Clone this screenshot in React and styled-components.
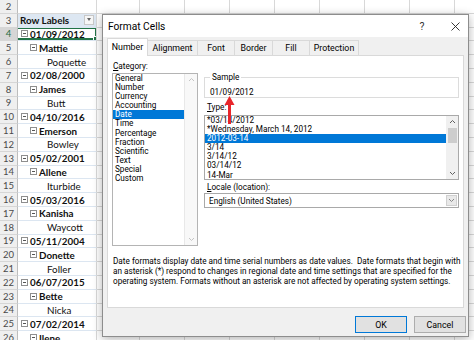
import React from 'react';
import styled, { createGlobalStyle } from 'styled-components';

const GlobalStyle = createGlobalStyle`
  html, body { margin: 0; padding: 0; background: #fff; }
  body { width: 474px; height: 340px; overflow: hidden; }
`;

const Page = styled.div`
  position: relative;
  width: 474px;
  height: 340px;
  overflow: hidden;
  font-family: Lato, 'Liberation Sans', sans-serif;
`;

/* ---------- spreadsheet ---------- */

const Sheet = styled.div`
  display: grid;
  grid-template-columns: 18px 79px 43px repeat(8, 45px);
  grid-auto-rows: 13.8px;
`;

const RowNum = styled.div`
  box-sizing: border-box;
  background: ${p => (p.$active ? '#d6d6d6' : '#efefef')};
  color: ${p => (p.$active ? '#1d6b3f' : '#4a4a4a')};
  border-right: 1px solid #bdbdbd;
  border-bottom: 1px solid #d6d6d6;
  font-size: 9.5px;
  display: flex;
  align-items: center;
  justify-content: center;
`;

const Cell = styled.div`
  box-sizing: border-box;
  border-right: 1px solid #d8d8d8;
  border-bottom: 1px solid #d8d8d8;
  background: #fff;
`;

const PivotCell = styled.div`
  position: relative;
  box-sizing: border-box;
  border-right: 1px solid #d8d8d8;
  border-bottom: 1px solid ${p => (p.$kind === 'blank' ? '#d8d8d8' : '#dce6f1')};
  background: ${p => (p.$kind === 'header' ? '#dde7f2' : '#fff')};
  display: flex;
  align-items: center;
  font-size: 9.8px;
  color: #111;
  font-weight: ${p => (p.$kind === 'last' ? 400 : 700)};
  padding-left: ${p =>
    ({ header: 2, date: 3, name: 12, last: 29, blank: 0 }[p.$kind])}px;
  gap: 2px;
  white-space: nowrap;
  overflow: hidden;
`;

const Selection = styled.div`
  position: absolute;
  inset: -1px -1px 0 -2px;
  border: 2px solid #217346;
  pointer-events: none;
  &::after {
    content: '';
    position: absolute;
    right: -4px;
    bottom: -4px;
    width: 4px;
    height: 4px;
    background: #217346;
    border: 1px solid #fff;
  }
`;

const Collapse = styled.span`
  position: relative;
  width: 5px;
  height: 5px;
  border: 1px solid #8e8e8e;
  flex: none;
  &::after {
    content: '';
    position: absolute;
    left: 1px;
    right: 1px;
    top: 2px;
    height: 1px;
    background: #555;
  }
`;

const FilterButton = styled.span`
  position: absolute;
  right: 2px;
  top: 1px;
  width: 10px;
  height: 10px;
  box-sizing: border-box;
  border: 1px solid #c8c8c8;
  background: #f6f6f6;
  display: flex;
  align-items: center;
  justify-content: center;
  &::after {
    content: '';
    border-left: 2.5px solid transparent;
    border-right: 2.5px solid transparent;
    border-top: 3px solid #666;
  }
`;

const pivot = [
  ['blank', ''],
  ['header', 'Row Labels'],
  ['date', '01/09/2012'],
  ['name', 'Mattie'],
  ['last', 'Poquette'],
  ['date', '02/08/2000'],
  ['name', 'James'],
  ['last', 'Butt'],
  ['date', '04/10/2016'],
  ['name', 'Emerson'],
  ['last', 'Bowley'],
  ['date', '05/02/2001'],
  ['name', 'Allene'],
  ['last', 'Iturbide'],
  ['date', '05/03/2016'],
  ['name', 'Kanisha'],
  ['last', 'Waycott'],
  ['date', '05/11/2004'],
  ['name', 'Donette'],
  ['last', 'Foller'],
  ['date', '06/07/2015'],
  ['name', 'Bette'],
  ['last', 'Nicka'],
  ['date', '07/02/2014'],
  ['name', 'Ilene'],
];

/* ---------- dialog ---------- */

const Dialog = styled.div`
  position: absolute;
  left: 102px;
  top: 14px;
  width: 367px;
  height: 323px;
  box-sizing: border-box;
  border: 1px solid #8d8d8d;
  background: #f0f0f0;
  box-shadow: 0 2px 9px rgba(0, 0, 0, 0.3);
  display: flex;
  flex-direction: column;
  font-family: Roboto, 'Noto Sans', sans-serif;
  font-size: 8.2px;
  color: #000;
`;

const TitleBar = styled.div`
  height: 22px;
  flex: none;
  background: #fff;
  display: flex;
  align-items: center;
  padding: 0 0 0 5px;
  font-size: 10.2px;
`;

const Title = styled.span`
  flex: 1;
`;

const TitleIcon = styled.span`
  width: ${p => p.$w}px;
  display: flex;
  justify-content: center;
  align-items: center;
  color: #333;
  font-size: 10.5px;
`;

const Body = styled.div`
  flex: 1;
  display: flex;
  flex-direction: column;
  padding: 2px 0 0 4px;
`;

const Tabs = styled.div`
  display: flex;
  height: 17px;
  align-items: flex-end;
  position: relative;
  z-index: 1;
  margin-bottom: -1px;
  font-size: 8.8px;
`;

const Tab = styled.div`
  box-sizing: border-box;
  width: ${p => p.$w}px;
  height: ${p => (p.$active ? 18 : 16)}px;
  background: ${p => (p.$active ? '#fff' : '#f0f0f0')};
  border: 1px solid #d9d9d9;
  border-bottom: ${p => (p.$active ? 'none' : '1px solid #d9d9d9')};
  margin-left: ${p => (p.$first ? 0 : -1)}px;
  display: flex;
  align-items: center;
  justify-content: center;
  padding-bottom: ${p => (p.$active ? 1 : 0)}px;
`;

const Panel = styled.div`
  position: relative;
  box-sizing: border-box;
  width: 357px;
  height: 253px;
  background: #fff;
  border: 1px solid #d9d9d9;
  padding: 5px 0 0 4px;
`;

const Columns = styled.div`
  display: grid;
  grid-template-columns: 86px 255px;
  column-gap: 6px;
`;

const Column = styled.div`
  display: flex;
  flex-direction: column;
  padding-top: ${p => p.$pt || 0}px;
`;

const Label = styled.div`
  line-height: 10px;
  height: 10px;
  margin-top: ${p => p.$mt || 0}px;
  margin-bottom: ${p => p.$mb || 0}px;
  padding-left: ${p => p.$pl || 0}px;
  u { text-decoration-thickness: 1px; text-underline-offset: 1px; }
`;

const ListBox = styled.div`
  box-sizing: border-box;
  height: ${p => p.$h}px;
  border: 1px solid ${p => p.$border || '#a9a9a9'};
  background: #fff;
  display: flex;
`;

const Items = styled.div`
  flex: 1;
  display: flex;
  flex-direction: column;
`;

const Item = styled.div`
  height: 9.1px;
  line-height: 9.1px;
  padding-left: 2px;
  white-space: nowrap;
  background: ${p => (p.$selected ? '#0078d7' : 'transparent')};
  color: ${p => (p.$selected ? '#fff' : '#000')};
`;

const ScrollBar = styled.div`
  width: ${p => p.$w}px;
  flex: none;
  display: flex;
  flex-direction: column;
  background: ${p => (p.$disabled ? '#f8f8f8' : '#f0f0f0')};
  border-left: 1px solid ${p => (p.$disabled ? '#e8e8e8' : '#f0f0f0')};
`;

const ScrollArrow = styled.div`
  height: 11px;
  display: flex;
  align-items: center;
  justify-content: center;
`;

const Thumb = styled.div`
  height: 15px;
  margin: 1px 1px 0;
  background: #cdcdcd;
`;

const Spacer = styled.div`
  flex: 1;
`;

const Group = styled.fieldset`
  margin: 0;
  padding: 5px 0 0 5px;
  border: 1px solid #dcdcdc;
  min-width: 0;
  height: 26px;
  box-sizing: border-box;
  legend {
    padding: 0 2px;
    line-height: 10px;
  }
`;

const Value = styled.div`
  line-height: 10px;
`;

const Combo = styled.div`
  box-sizing: border-box;
  height: 15px;
  margin-top: 1px;
  border: 1px solid #a9a9a9;
  display: flex;
  align-items: center;
  padding-left: 4px;
`;

const ComboText = styled.span`
  flex: 1;
`;

const ComboButton = styled.span`
  width: 11px;
  height: 11px;
  margin-right: 1px;
  background: #e9e9e9;
  border: 1px solid #d0d0d0;
  box-sizing: border-box;
  display: flex;
  align-items: center;
  justify-content: center;
`;

const Note = styled.div`
  margin-top: 10px;
  padding-left: 1px;
  line-height: 10px;
  white-space: nowrap;
  span { display: block; }
`;

const Arrow = styled.svg`
  position: absolute;
  left: 116px;
  top: 40px;
`;

const Footer = styled.div`
  display: flex;
  justify-content: flex-end;
  gap: 7px;
  padding: 8px 2px 0 0;
`;

const Button = styled.div`
  box-sizing: border-box;
  width: ${p => p.$w}px;
  height: 17px;
  background: #e1e1e1;
  border: 1px solid ${p => (p.$primary ? '#0078d7' : '#adadad')};
  display: flex;
  align-items: center;
  justify-content: center;
  font-size: 8.8px;
`;

const Chevron = ({ up, color = '#606060' }) => (
  <svg width="7" height="5" viewBox="0 0 7 5">
    <polyline
      points={up ? '1,4 3.5,1.5 6,4' : '1,1 3.5,3.5 6,1'}
      fill="none"
      stroke={color}
      strokeWidth="1"
    />
  </svg>
);

const categories = [
  'General', 'Number', 'Currency', 'Accounting', 'Date', 'Time', 'Percentage',
  'Fraction', 'Scientific', 'Text', 'Special', 'Custom',
];

const types = [
  '*03/14/2012', '*Wednesday, March 14, 2012', '2012-03-14', '3/14', '3/14/12',
  '03/14/12', '14-Mar',
];

const tabs = [
  ['Number', 41], ['Alignment', 51], ['Font', 38], ['Border', 39], ['Fill', 38],
  ['Protection', 50],
];

const App = () => (
  <Page>
    <GlobalStyle />
    <Sheet>
      {pivot.map(([kind, text], i) => {
        const row = i + 2;
        return (
          <React.Fragment key={row}>
            <RowNum $active={row === 4}>{row}</RowNum>
            <PivotCell $kind={kind}>
              {(kind === 'date' || kind === 'name') && <Collapse />}
              {text}
              {kind === 'header' && <FilterButton />}
              {row === 4 && <Selection />}
            </PivotCell>
            {Array.from({ length: 9 }).map((_, c) => (
              <Cell key={c} />
            ))}
          </React.Fragment>
        );
      })}
    </Sheet>

    <Dialog>
      <TitleBar>
        <Title>Format Cells</Title>
        <TitleIcon $w={40}>?</TitleIcon>
        <TitleIcon $w={26}>
          <svg width="9" height="9" viewBox="0 0 9 9">
            <path d="M0.5 0.5 L8.5 8.5 M8.5 0.5 L0.5 8.5" stroke="#222" strokeWidth="0.9" />
          </svg>
        </TitleIcon>
      </TitleBar>
      <Body>
        <Tabs>
          {tabs.map(([name, w], i) => (
            <Tab key={name} $w={w} $active={i === 0} $first={i === 0}>
              {name}
            </Tab>
          ))}
        </Tabs>
        <Panel>
          <Columns>
            <Column>
              <Label $mb={2} $pl={1}>
                <u>C</u>ategory:
              </Label>
              <ListBox $h={173} $border="#b4b4b4">
                <Items>
                  {categories.map(c => (
                    <Item key={c} $selected={c === 'Date'}>
                      {c}
                    </Item>
                  ))}
                </Items>
                <ScrollBar $w={12} $disabled>
                  <ScrollArrow>
                    <Chevron up color="#c4c4c4" />
                  </ScrollArrow>
                  <Spacer />
                  <ScrollArrow>
                    <Chevron color="#c4c4c4" />
                  </ScrollArrow>
                </ScrollBar>
              </ListBox>
            </Column>
            <Column $pt={11}>
              <Group>
                <legend>Sample</legend>
                <Value>01/09/2012</Value>
              </Group>
              <Label $mt={4} $mb={3} $pl={3}>
                <u>T</u>ype:
              </Label>
              <ListBox $h={65}>
                <Items>
                  {types.map(t => (
                    <Item key={t} $selected={t === '2012-03-14'}>
                      {t}
                    </Item>
                  ))}
                </Items>
                <ScrollBar $w={11}>
                  <ScrollArrow>
                    <Chevron up />
                  </ScrollArrow>
                  <Thumb />
                  <Spacer />
                  <ScrollArrow>
                    <Chevron />
                  </ScrollArrow>
                </ScrollBar>
              </ListBox>
              <Label $mt={2} $pl={3}>
                <u>L</u>ocale (location):
              </Label>
              <Combo>
                <ComboText>English (United States)</ComboText>
                <ComboButton>
                  <Chevron color="#888" />
                </ComboButton>
              </Combo>
            </Column>
          </Columns>
          <Note>
            <span>Date formats display date and time serial numbers as date values.&nbsp; Date formats that begin with</span>
            <span>an asterisk (*) respond to changes in regional date and time settings that are specified for the</span>
            <span>operating system. Formats without an asterisk are not affected by operating system settings.</span>
          </Note>
          <Arrow width="11" height="28" viewBox="0 0 11 28">
            <polygon points="5.5,0 10.5,9 0.5,9" fill="#e8262b" />
            <rect x="4" y="8" width="3" height="20" fill="#e8262b" />
          </Arrow>
        </Panel>
        <Footer>
          <Button $w={52} $primary>OK</Button>
          <Button $w={52}>Cancel</Button>
        </Footer>
      </Body>
    </Dialog>
  </Page>
);

export default App;
